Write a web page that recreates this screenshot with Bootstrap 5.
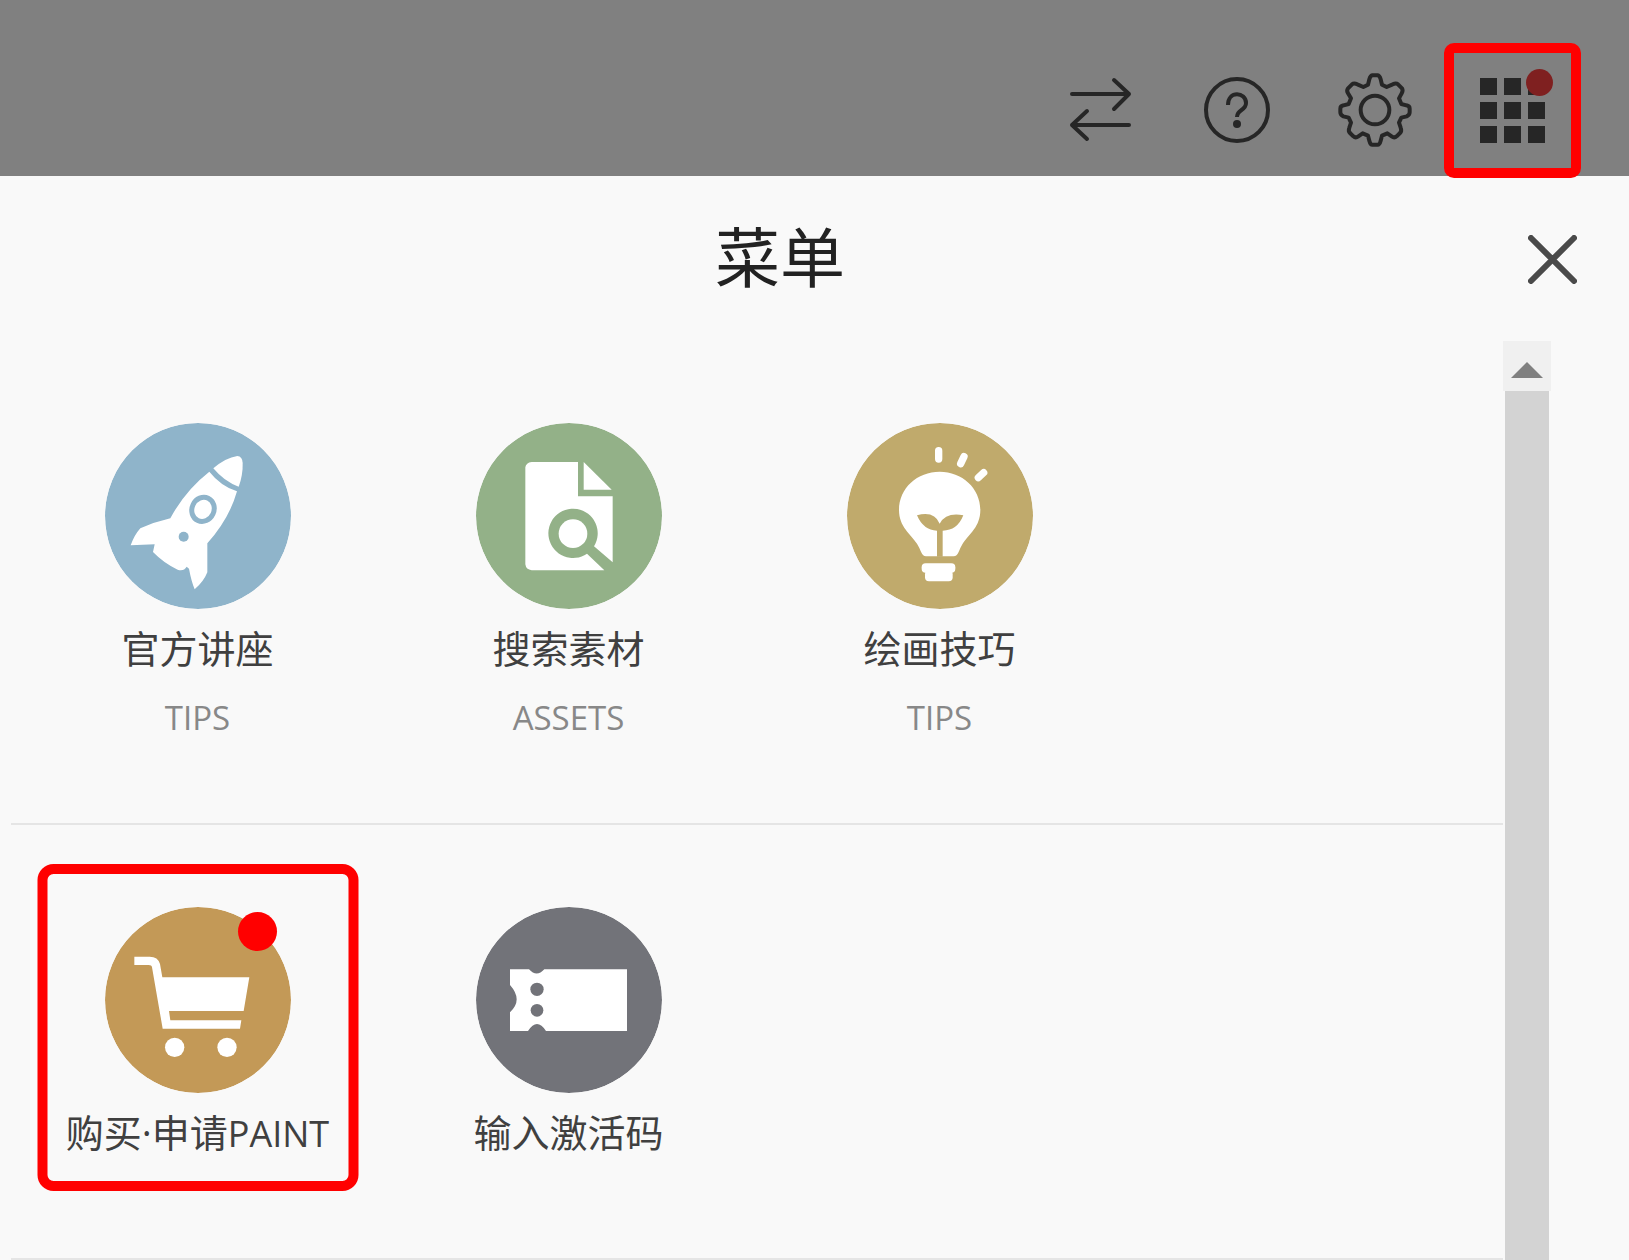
<!DOCTYPE html>
<html lang="zh-CN">
<head>
<meta charset="utf-8">
<meta name="viewport" content="width=device-width, initial-scale=1">
<title>菜单</title>
<link href="https://cdn.jsdelivr.net/npm/bootstrap@5.3.0/dist/css/bootstrap.min.css" rel="stylesheet">
<style>
body{background:#f9f9f9;color:#333;font-family:"Open Sans","Noto Sans CJK SC",sans-serif}
svg{display:block}
.toolbar{background:#808080;height:176px;padding:43px 48px 0 0;gap:68px}
.tool-btn{height:134px;color:#262626}
.tool-btn svg{overflow:visible}
.apps-btn{width:137px;height:135px;border:10px solid red!important;border-radius:10px;z-index:1;margin-left:-36px}
.alert-dot{width:27px;height:27px;background:#7f2020;top:16px;right:18px}
.menu-head{height:165px;padding:2px 52px 0 32px}
.menu-title{font-size:65px;line-height:80px;margin:0 0 12px;font-weight:400;color:#222;font-family:"Noto Sans CJK SC",sans-serif}
.menu-body{padding:0 78px 0 11px}
.menu-group{padding:82px 7px 0 1px;border-bottom:2px solid #e5e5e5}
.group-tips{padding-bottom:83px}
.group-buy{padding-bottom:98px}
.menu-item{color:#404040}
.item-icon{width:186px;height:186px;margin-bottom:11px;border-radius:50%}
.item-name{font-size:38px;line-height:56px;height:56px;white-space:nowrap}
.latin{font-size:36px}
.item-sub{font-size:33px;line-height:44px;margin-top:20px;color:#888}
.picked::after{content:"";position:absolute;top:-43px;bottom:-31px;left:50%;width:321px;transform:translateX(-50%);border:10px solid red;border-radius:16px}
.new-dot{width:39px;height:39px;background:red;top:5px;right:14px}
.scroll-bar{width:48px}
.scroll-up{height:50px;background:#f0f0f0;padding:8px 0 0!important}
.scroll-thumb{background:#d3d3d3;margin:0 2px}
</style>
<script src="https://cdn.jsdelivr.net/npm/bootstrap@5.3.0/dist/js/bootstrap.bundle.min.js"></script>
</head>
<body class="vh-100 d-flex flex-column overflow-hidden">
<header class="toolbar d-flex justify-content-end flex-shrink-0">
  <button class="tool-btn btn border-0 p-0" aria-label="切换">
    <svg width="66" height="64" viewBox="18 0 66 64" fill="none" stroke="currentColor" stroke-width="4" stroke-linecap="round" stroke-linejoin="round"><path d="M20 16H77M62 2L77 16L62 31M77 47H20M35 33L20 47L35 61"/></svg>
  </button>
  <button class="tool-btn btn border-0 p-0" aria-label="帮助">
    <svg width="66" height="66" viewBox="0 0 66 66" fill="none" stroke="currentColor" stroke-width="4"><circle cx="33" cy="33" r="31"/><path d="M24 28C24 13 42 15 42 26C42 34 33 32 33 40"/><circle cx="33" cy="47" r="4" fill="currentColor" stroke="none"/></svg>
  </button>
  <button class="tool-btn btn border-0 p-0" aria-label="设置">
    <svg width="74" height="74" viewBox="0 0 222 222" fill="none" stroke="currentColor" stroke-width="12" stroke-linejoin="round"><circle cx="111" cy="111" r="43"/><path d="M94 19Q97 8 103 7H119Q125 8 128 19L132 35L146 42L164 34Q174 29 180 34L192 46Q196 53 191 61L183 76L190 93L205 97Q215 99 215 107V118Q215 126 206 130L190 134L183 149L188 164Q192 174 186 180L176 190Q169 196 161 190L148 181L132 188L128 203Q125 215 119 215H103Q97 215 94 203L90 188L74 181L61 190Q53 196 46 190L36 180Q30 174 34 164L39 149L32 134L16 130Q7 126 7 118V107Q7 99 17 97L32 93L39 76L30 61Q25 53 30 46L42 34Q48 29 58 34L76 42L90 35Z"/></svg>
  </button>
  <button class="apps-btn btn p-0 position-relative d-flex align-items-center justify-content-center" aria-label="菜单">
    <svg width="66" height="66" viewBox="0 0 66 66" fill="#262626"><path d="M0 0h17v17H0zM24 0h17v17H24zM48 0h17v17H48zM0 24h17v17H0zM24 24h17v17H24zM48 24h17v17H48zM0 48h17v17H0zM24 48h17v17H24zM48 48h17v17H48z"/></svg>
    <span class="alert-dot position-absolute rounded-circle"></span>
  </button>
</header>
<div class="menu-head d-flex align-items-center flex-shrink-0">
  <h1 class="menu-title flex-grow-1 text-center">菜单</h1>
  <button class="btn border-0 p-0" aria-label="关闭">
    <svg width="49" height="49" viewBox="0 0 49 49" stroke="#4a4a4a" stroke-width="6" stroke-linecap="round"><path d="M3 3L46 46M46 3L3 46"/></svg>
  </button>
</div>
<main class="menu-body d-flex flex-grow-1 overflow-hidden">
  <div class="flex-grow-1">
    <section class="menu-group group-tips">
      <div class="row row-cols-4 g-0">
        <div class="col"><a href="#" class="menu-item d-flex flex-column align-items-center text-decoration-none">
          <svg class="item-icon" viewBox="47 40 558 558" fill="#fff"><circle cx="326" cy="319" r="279" fill="#8fb4ca"/><path d="M372 176Q409 144 444 139Q459 140 460 160Q461 197 448 231Q405 216 372 176Z"/><path d="M360 186Q394 229 443 245Q420 327 354 401L354 488Q343 516 316 539Q306 515 299 477L292 471Q283 486 265 480Q224 461 191 427L196 404L124 407Q135 376 153 356Q195 337 243 326Q287 243 360 186Z"/><ellipse cx="341" cy="299" rx="33" ry="37" transform="rotate(25 341 299)" fill="none" stroke="#8fb4ca" stroke-width="15"/><circle cx="283" cy="381" r="15" fill="#8fb4ca"/></svg>
          <span class="item-name">官方讲座</span><span class="item-sub">TIPS</span></a></div>
        <div class="col"><a href="#" class="menu-item d-flex flex-column align-items-center text-decoration-none">
          <svg class="item-icon" viewBox="50 40 558 558" fill="#fff"><circle cx="329" cy="319" r="279" fill="#93b188"/><path d="M217 157H356V260H460V458L404 410A74 74 0 1 0 383 432L435 482H217Q200 480 198 464V173Q200 159 217 157Z"/><path d="M373 157L457 240H373Z"/><circle cx="341" cy="372" r="43"/></svg>
          <span class="item-name">搜索素材</span><span class="item-sub">ASSETS</span></a></div>
        <div class="col"><a href="#" class="menu-item d-flex flex-column align-items-center text-decoration-none">
          <svg class="item-icon" viewBox="53 40 558 558" fill="#fff"><circle cx="332" cy="319" r="279" fill="#c0aa6c"/><path d="M331 186C398 186 453 235 453 301C453 352 419 373 400 402C389 419 387 440 373 440H290C277 440 274 419 263 402C244 373 209 352 209 301C209 235 264 186 331 186Z"/><path d="M263 317Q315 303 331 342Q350 307 402 317Q384 363 340 363V441H323V363Q282 362 263 317Z" fill="#c0aa6c"/><rect x="277" y="461" width="101" height="28" rx="12"/><rect x="287" y="482" width="83" height="33" rx="12"/><g stroke="#fff" stroke-linecap="round" stroke-width="22"><path d="M328 123V148M404 141L394 162M463 189L447 204"/></g></svg>
          <span class="item-name">绘画技巧</span><span class="item-sub">TIPS</span></a></div>
      </div>
    </section>
    <section class="menu-group group-buy">
      <div class="row row-cols-4 g-0">
        <div class="col"><a href="#" class="menu-item picked position-relative d-flex flex-column align-items-center text-decoration-none">
          <span class="position-relative"><svg class="item-icon" viewBox="316 320 558 558" fill="#fff"><circle cx="595" cy="599" r="279" fill="#c39957"/><path d="M404 469H450Q475 469 481 491L488 531H749L732 632H508L512 660H725L721 685H489L457 501Q456 494 447 494H404Z"/><circle cx="525" cy="741" r="29"/><circle cx="682" cy="741" r="29"/></svg><span class="new-dot position-absolute rounded-circle"></span></span>
          <span class="item-name">购买·申请<span class="latin">PAINT</span></span></a></div>
        <div class="col"><a href="#" class="menu-item d-flex flex-column align-items-center text-decoration-none">
          <svg class="item-icon" viewBox="50 50 558 558" fill="#fff"><circle cx="329" cy="329" r="279" fill="#727379"/><path d="M152 237H209Q232 262 255 237H503V422H260Q233 380 206 422H152V366Q192 329 152 284Z"/><circle cx="233" cy="297" r="20" fill="#727379"/><circle cx="233" cy="360" r="19" fill="#727379"/></svg>
          <span class="item-name">输入激活码</span></a></div>
      </div>
    </section>
  </div>
  <div class="scroll-bar d-flex flex-column flex-shrink-0">
    <button class="scroll-up btn border-0 rounded-0 d-flex align-items-center justify-content-center" aria-label="向上滚动"><svg width="32" height="16" viewBox="0 0 32 16"><path d="M16 0L32 16H0Z" fill="#808080"/></svg></button>
    <div class="scroll-thumb flex-grow-1"></div>
  </div>
</main>
</body>
</html>
